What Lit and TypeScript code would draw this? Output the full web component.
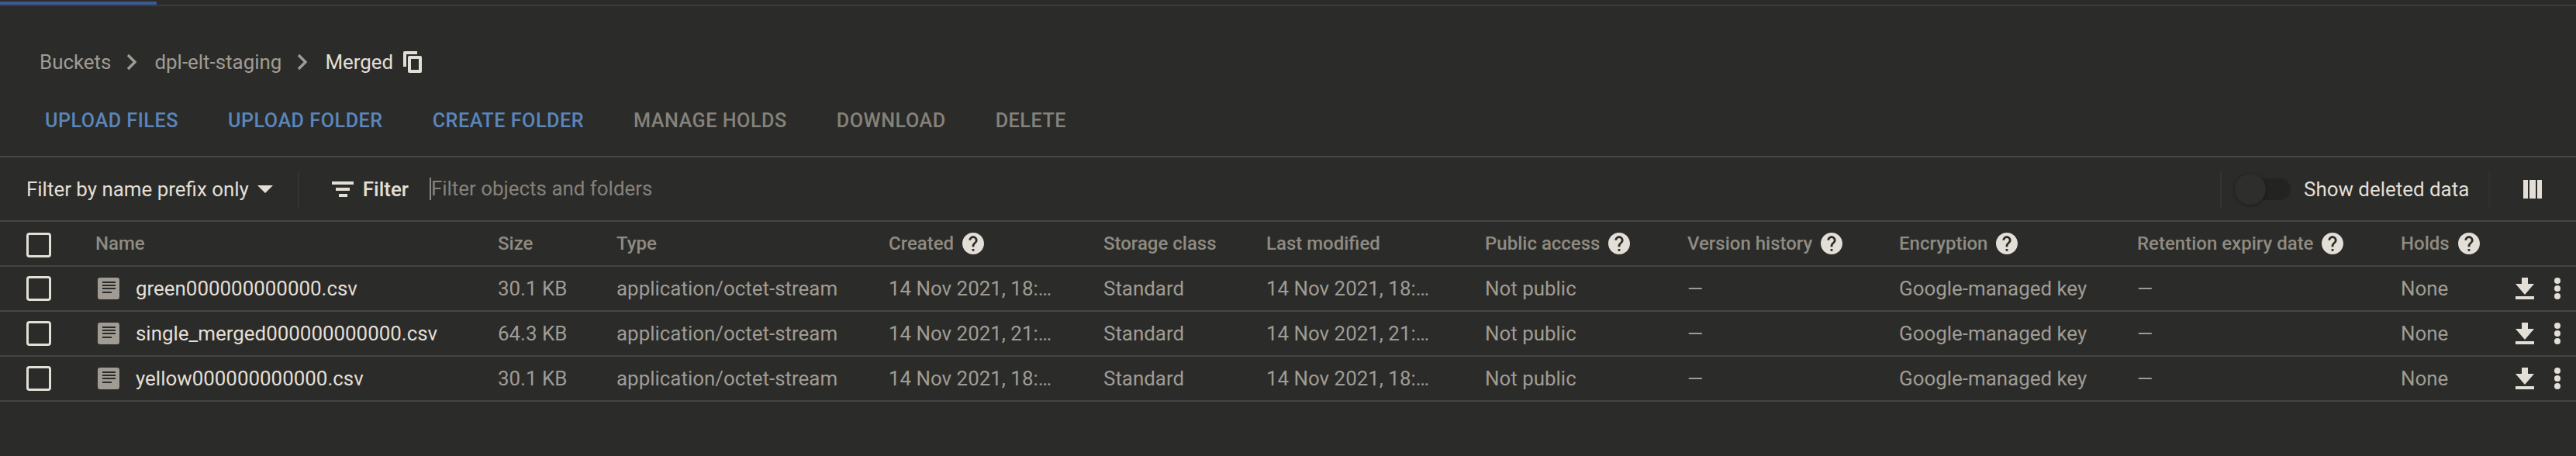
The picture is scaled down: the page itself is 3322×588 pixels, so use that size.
import { LitElement, html, css, svg } from "lit";
import { customElement } from "lit/decorators.js";

const helpPath = "M12 2C6.48 2 2 6.48 2 12s4.48 10 10 10 10-4.48 10-10S17.52 2 12 2zm1 17h-2v-2h2v2zm2.07-7.75l-.9.92C13.45 12.9 13 13.5 13 15h-2v-.5c0-1.1.45-2.1 1.17-2.83l1.24-1.26c.37-.36.59-.86.59-1.41 0-1.1-.9-2-2-2s-2 .9-2 2H8c0-2.21 1.79-4 4-4s4 1.79 4 4c0 .88-.36 1.68-.93 2.25z";

const help = () => html`<svg class="help" viewBox="2 2 20 20" width="28" height="28"><path fill="currentColor" d=${helpPath}></path></svg>`;
const chevron = () => html`<svg class="chev" viewBox="0 0 14 22" width="14" height="22"><path fill="none" stroke="currentColor" stroke-width="3.4" d="M2 2l9 9-9 9"></path></svg>`;
const checkbox = () => html`<span class="cb"></span>`;
const doc = () => html`<svg class="doc" viewBox="0 0 28 28" width="28" height="28">
  <rect width="28" height="28" rx="3" fill="#a09c94"></rect>
  ${[5, 9, 13].map((y) => svg`<rect x="6" y=${y} width="17" height="2" fill="#2b2b29"></rect>`)}
  <rect x="6" y="18" width="12" height="2" fill="#2b2b29"></rect>
</svg>`;
const download = () => html`<svg viewBox="0 0 24 28" width="24" height="28"><path fill="currentColor" d="M8 0h8v8h8L12 22 0 8h8zM0 24h24v4H0z"></path></svg>`;
const more = () => html`<svg viewBox="0 0 8 28" width="8" height="28"><circle cx="4" cy="4" r="4" fill="currentColor"></circle><circle cx="4" cy="14" r="4" fill="currentColor"></circle><circle cx="4" cy="24" r="4" fill="currentColor"></circle></svg>`;

const heads: [string, boolean][] = [
  ["Name", false], ["Size", false], ["Type", false], ["Created", true], ["Storage class", false],
  ["Last modified", false], ["Public access", true], ["Version history", true], ["Encryption", true],
  ["Retention expiry date", true], ["Holds", true],
];
const files = [
  { name: "green000000000000.csv", size: "30.1 KB", date: "14 Nov 2021, 18:…" },
  { name: "single_merged000000000000.csv", size: "64.3 KB", date: "14 Nov 2021, 21:…" },
  { name: "yellow000000000000.csv", size: "30.1 KB", date: "14 Nov 2021, 18:…" },
];

@customElement("app-root")
export class AppRoot extends LitElement {
  static styles = css`
    :host {
      display: block;
      width: 3322px;
      height: 588px;
      background: #2b2b29;
      color: #a09c94;
      font-family: Roboto, "Liberation Sans", sans-serif;
      font-size: 25.92px;
      overflow: hidden;
      --bright: #e3dfd6;
      --line: #454542;
    }
    svg { display: block; flex: none; }
    .progress { height: 8px; box-sizing: border-box; padding-top: 2px; border-bottom: 2px solid #3a3a38; }
    .progress div { width: 202px; height: 4px; background: #3a5a94; }
    .crumbs { display: flex; align-items: center; height: 40px; margin-top: 52px; padding-left: 51px; }
    .crumbs .chev { margin: 0 22px 0 20px; color: #a09c94; }
    .crumbs .cur { color: var(--bright); }
    .crumbs .copy { margin-left: 13px; color: var(--bright); }
    .actions { display: flex; align-items: center; height: 48px; margin-top: 31px; margin-bottom: -1px; padding-left: 58px; gap: 64px; font-size: 25.2px; font-weight: 500; letter-spacing: 0.5px; color: #85827b; }
    .actions .on { color: #5a86bc; }
    .toolbar { display: flex; align-items: center; height: 81px; margin-top: 23px; border-top: 2px solid var(--line); border-bottom: 2px solid var(--line); color: var(--bright); }
    .sel { margin-left: 34px; }
    .tri { margin-left: 11px; }
    .vr { width: 2px; height: 48px; background: #343432; flex: none; }
    .vr.a { margin-left: 32px; }
    .ficon { margin-left: 42px; }
    .fl { margin-left: 12px; font-weight: 500; }
    .input { margin-left: 27px; flex: 1; height: 29px; line-height: 29px; border-left: 2px solid #8a8a8a; color: #85827b; }
    .toggle { position: relative; width: 72px; height: 40px; margin-left: 17px; margin-right: -1px; flex: none; }
    .track { position: absolute; left: 6px; right: 0; top: 6px; height: 28px; border-radius: 14px; background: #232321; }
    .thumb { position: absolute; left: 0; top: 0; width: 40px; height: 40px; border-radius: 50%; background: #2e2e2c; box-shadow: 0 1px 4px rgba(0,0,0,.35); }
    .sd { margin-left: 18px; width: 238px; flex: none; white-space: nowrap; }
    .vr.b { background: #30302e; }
    .cols { margin-left: 43px; margin-right: 44px; display: flex; gap: 2px; height: 24px; }
    .cols i { display: block; height: 24px; background: var(--bright); }
    .row {
      display: grid;
      grid-template-columns: 89px 519px 153px 351px 277px 210px 282px 261px 273px 307px 340px 148px 1fr;
      padding-left: 34px;
      align-items: center;
      height: 56px;
      border-bottom: 2px solid var(--line);
      white-space: nowrap;
    }
    .row.head { font-size: 24px; font-weight: 500; color: #8f8b83; }
    .hc { display: flex; align-items: center; gap: 11px; }
    .help { color: var(--bright); }
    .cb { display: block; width: 32px; height: 32px; box-sizing: border-box; border: 3.5px solid var(--bright); border-radius: 4px; }
    .head .cb { margin-top: 4px; }
    .head .hc { margin-top: -1px; }
    .name { display: flex; align-items: center; color: var(--bright); margin-left: 3px; gap: 21px; }
    .act { display: flex; align-items: center; gap: 26px; color: var(--bright); }
  `;

  render() {
    return html`
      <div class="progress"><div></div></div>
      <nav class="crumbs">
        <span>Buckets</span>${chevron()}<span>dpl-elt-staging</span>${chevron()}<span class="cur">Merged</span>
        <svg class="copy" viewBox="0 0 24 28" width="24" height="28"><path fill="currentColor" fill-rule="evenodd" d="M2 0h16v4H4v16H0V2a2 2 0 0 1 2-2zM8 6h14a2 2 0 0 1 2 2v18a2 2 0 0 1-2 2H8a2 2 0 0 1-2-2V8a2 2 0 0 1 2-2zM10 10v14h10V10z"></path></svg>
      </nav>
      <div class="actions">
        <span class="on">UPLOAD FILES</span><span class="on">UPLOAD FOLDER</span><span class="on">CREATE FOLDER</span>
        <span>MANAGE HOLDS</span><span>DOWNLOAD</span><span>DELETE</span>
      </div>
      <div class="toolbar">
        <span class="sel">Filter by name prefix only</span>
        <svg class="tri" viewBox="0 0 20 10" width="20" height="10"><path fill="currentColor" d="M0 0h20L10 10z"></path></svg>
        <span class="vr a"></span>
        <svg class="ficon" viewBox="0 0 28 20" width="28" height="20"><path fill="currentColor" d="M0 0h28v4H0zM5 8h18v4H5zM9 16h11v4H9z"></path></svg>
        <span class="fl">Filter</span>
        <span class="input">Filter objects and folders</span>
        <span class="vr"></span>
        <span class="toggle"><span class="track"></span><span class="thumb"></span></span>
        <span class="sd">Show deleted data</span>
        <span class="vr b"></span>
        <span class="cols"><i style="width:6px"></i><i style="width:8px"></i><i style="width:6px"></i></span>
      </div>
      <div class="row head">
        ${checkbox()}
        ${heads.map(([t, h]) => html`<div class="hc"><span>${t}</span>${h ? help() : ""}</div>`)}
        <div></div>
      </div>
      ${files.map((f) => html`
        <div class="row">
          ${checkbox()}
          <div class="name">${doc()}<span>${f.name}</span></div>
          <div>${f.size}</div>
          <div>application/octet-stream</div>
          <div>${f.date}</div>
          <div>Standard</div>
          <div>${f.date}</div>
          <div>Not public</div>
          <div>—</div>
          <div>Google-managed key</div>
          <div>—</div>
          <div>None</div>
          <div class="act">${download()}${more()}</div>
        </div>
      `)}
    `;
  }
}
